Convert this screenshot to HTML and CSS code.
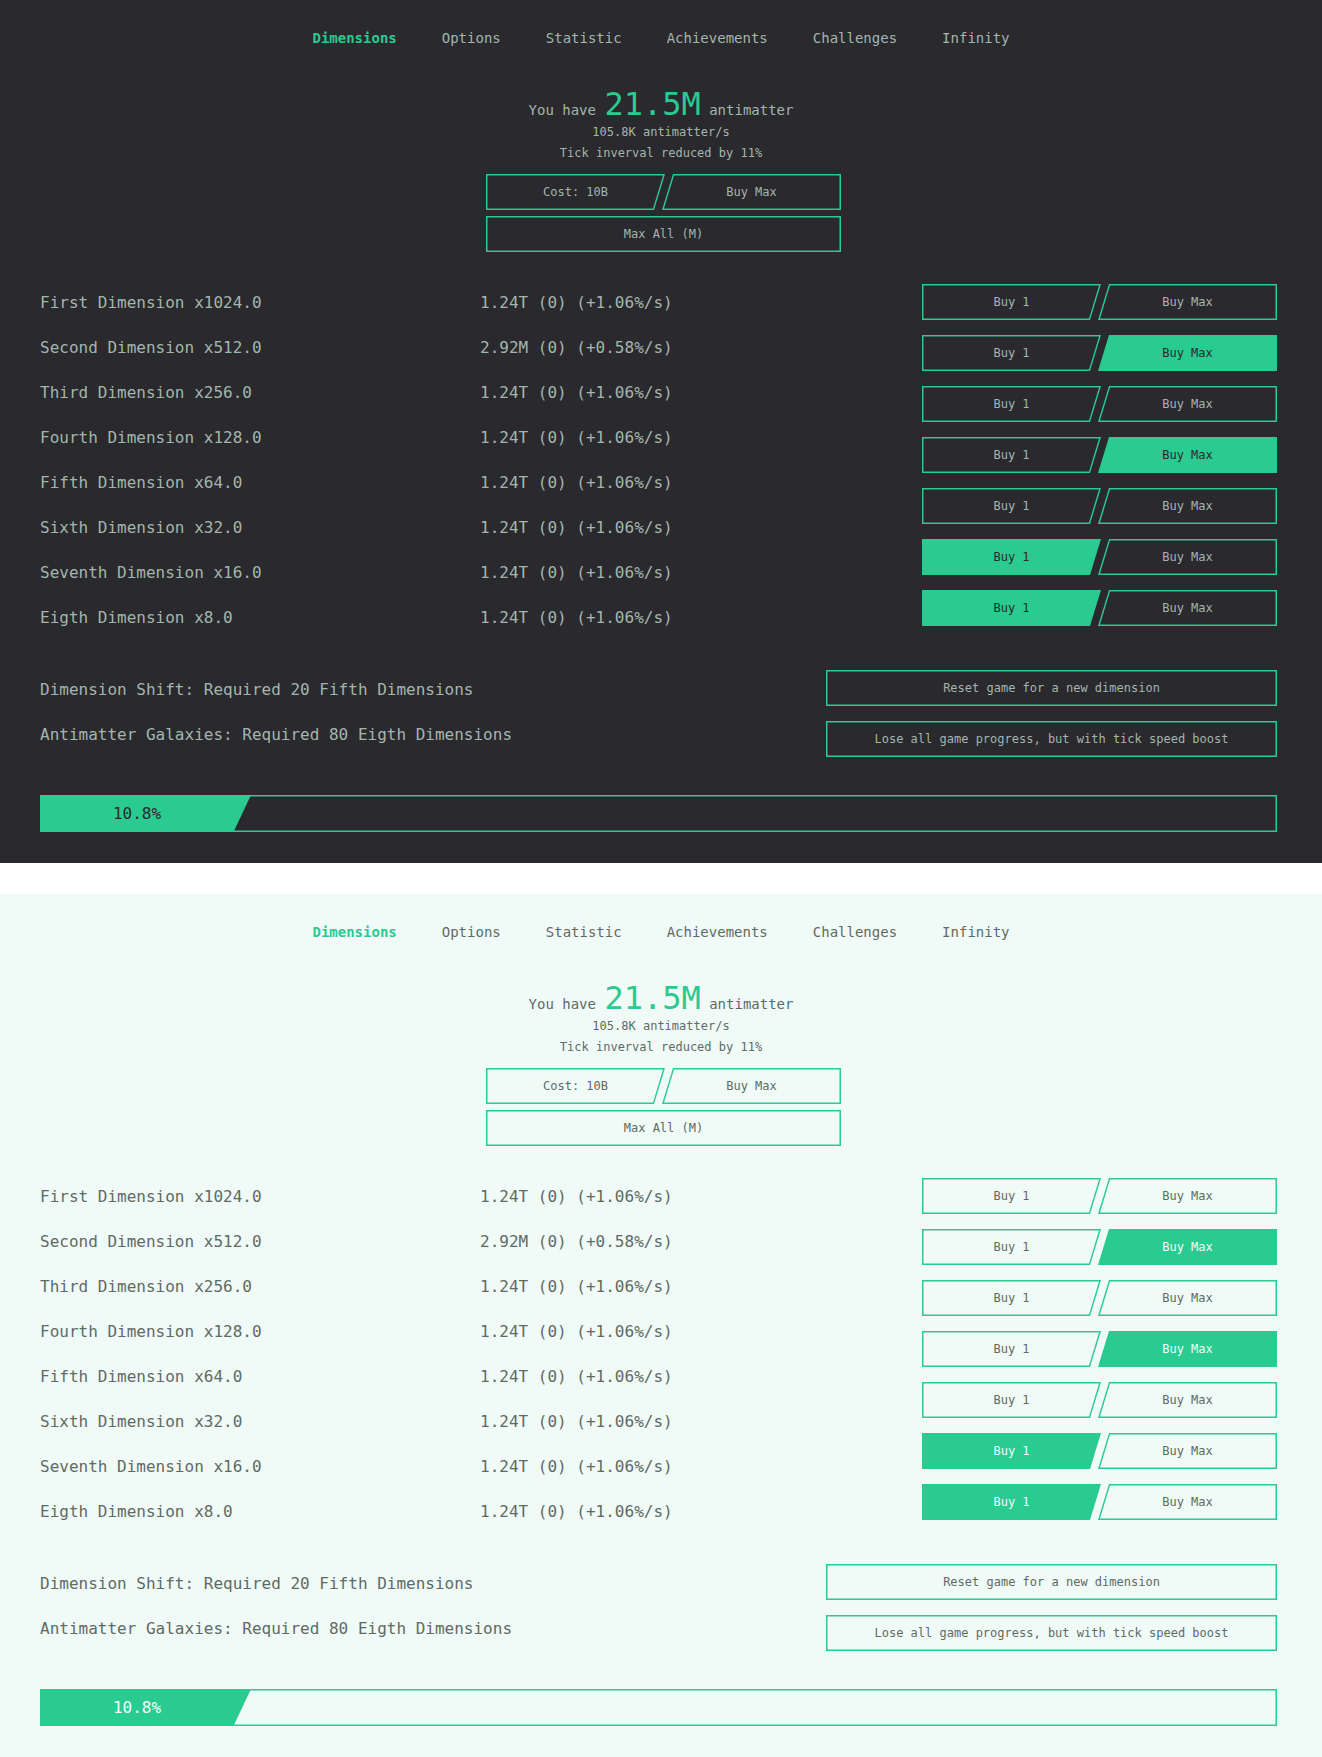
FILE: index.html
```html
<!DOCTYPE html>
<html lang="en">
<head>
<meta charset="utf-8">
<title>Antimatter Dimensions</title>
<link rel="stylesheet" href="styles.css">
</head>
<body>
<div class="theme dark">
  <nav class="tabs">
    <span class="tab active">Dimensions</span>
    <span class="tab">Options</span>
    <span class="tab">Statistic</span>
    <span class="tab">Achievements</span>
    <span class="tab">Challenges</span>
    <span class="tab">Infinity</span>
  </nav>
  <header class="summary">
    <p class="amount">You have <span class="big">21.5M</span> antimatter</p>
    <p class="rate">105.8K antimatter/s</p>
    <p class="rate">Tick inverval reduced by 11%</p>
    <div class="tick">
      <div class="pair">
        <button class="seg first">Cost: 10B</button>
        <button class="seg second">Buy Max</button>
      </div>
      <button class="box">Max All (M)</button>
    </div>
  </header>
  <section class="split dims">
    <div class="labels">
      <div class="row"><span class="name">First Dimension x1024.0</span><span class="val">1.24T (0) (+1.06%/s)</span></div>
      <div class="row"><span class="name">Second Dimension x512.0</span><span class="val">2.92M (0) (+0.58%/s)</span></div>
      <div class="row"><span class="name">Third Dimension x256.0</span><span class="val">1.24T (0) (+1.06%/s)</span></div>
      <div class="row"><span class="name">Fourth Dimension x128.0</span><span class="val">1.24T (0) (+1.06%/s)</span></div>
      <div class="row"><span class="name">Fifth Dimension x64.0</span><span class="val">1.24T (0) (+1.06%/s)</span></div>
      <div class="row"><span class="name">Sixth Dimension x32.0</span><span class="val">1.24T (0) (+1.06%/s)</span></div>
      <div class="row"><span class="name">Seventh Dimension x16.0</span><span class="val">1.24T (0) (+1.06%/s)</span></div>
      <div class="row"><span class="name">Eigth Dimension x8.0</span><span class="val">1.24T (0) (+1.06%/s)</span></div>
    </div>
    <div class="controls buys">
      <div class="pair"><button class="seg first">Buy 1</button><button class="seg second">Buy Max</button></div>
      <div class="pair"><button class="seg first">Buy 1</button><button class="seg second on">Buy Max</button></div>
      <div class="pair"><button class="seg first">Buy 1</button><button class="seg second">Buy Max</button></div>
      <div class="pair"><button class="seg first">Buy 1</button><button class="seg second on">Buy Max</button></div>
      <div class="pair"><button class="seg first">Buy 1</button><button class="seg second">Buy Max</button></div>
      <div class="pair"><button class="seg first on">Buy 1</button><button class="seg second">Buy Max</button></div>
      <div class="pair"><button class="seg first on">Buy 1</button><button class="seg second">Buy Max</button></div>
    </div>
  </section>
  <section class="split resets">
    <div class="labels">
      <div class="row">Dimension Shift: Required 20 Fifth Dimensions</div>
      <div class="row">Antimatter Galaxies: Required 80 Eigth Dimensions</div>
    </div>
    <div class="controls wide">
      <button class="box">Reset game for a new dimension</button>
      <button class="box">Lose all game progress, but with tick speed boost</button>
    </div>
  </section>
  <div class="progress"><div class="fill">10.8%</div></div>
</div>

<div class="theme light">
  <nav class="tabs">
    <span class="tab active">Dimensions</span>
    <span class="tab">Options</span>
    <span class="tab">Statistic</span>
    <span class="tab">Achievements</span>
    <span class="tab">Challenges</span>
    <span class="tab">Infinity</span>
  </nav>
  <header class="summary">
    <p class="amount">You have <span class="big">21.5M</span> antimatter</p>
    <p class="rate">105.8K antimatter/s</p>
    <p class="rate">Tick inverval reduced by 11%</p>
    <div class="tick">
      <div class="pair">
        <button class="seg first">Cost: 10B</button>
        <button class="seg second">Buy Max</button>
      </div>
      <button class="box">Max All (M)</button>
    </div>
  </header>
  <section class="split dims">
    <div class="labels">
      <div class="row"><span class="name">First Dimension x1024.0</span><span class="val">1.24T (0) (+1.06%/s)</span></div>
      <div class="row"><span class="name">Second Dimension x512.0</span><span class="val">2.92M (0) (+0.58%/s)</span></div>
      <div class="row"><span class="name">Third Dimension x256.0</span><span class="val">1.24T (0) (+1.06%/s)</span></div>
      <div class="row"><span class="name">Fourth Dimension x128.0</span><span class="val">1.24T (0) (+1.06%/s)</span></div>
      <div class="row"><span class="name">Fifth Dimension x64.0</span><span class="val">1.24T (0) (+1.06%/s)</span></div>
      <div class="row"><span class="name">Sixth Dimension x32.0</span><span class="val">1.24T (0) (+1.06%/s)</span></div>
      <div class="row"><span class="name">Seventh Dimension x16.0</span><span class="val">1.24T (0) (+1.06%/s)</span></div>
      <div class="row"><span class="name">Eigth Dimension x8.0</span><span class="val">1.24T (0) (+1.06%/s)</span></div>
    </div>
    <div class="controls buys">
      <div class="pair"><button class="seg first">Buy 1</button><button class="seg second">Buy Max</button></div>
      <div class="pair"><button class="seg first">Buy 1</button><button class="seg second on">Buy Max</button></div>
      <div class="pair"><button class="seg first">Buy 1</button><button class="seg second">Buy Max</button></div>
      <div class="pair"><button class="seg first">Buy 1</button><button class="seg second on">Buy Max</button></div>
      <div class="pair"><button class="seg first">Buy 1</button><button class="seg second">Buy Max</button></div>
      <div class="pair"><button class="seg first on">Buy 1</button><button class="seg second">Buy Max</button></div>
      <div class="pair"><button class="seg first on">Buy 1</button><button class="seg second">Buy Max</button></div>
    </div>
  </section>
  <section class="split resets">
    <div class="labels">
      <div class="row">Dimension Shift: Required 20 Fifth Dimensions</div>
      <div class="row">Antimatter Galaxies: Required 80 Eigth Dimensions</div>
    </div>
    <div class="controls wide">
      <button class="box">Reset game for a new dimension</button>
      <button class="box">Lose all game progress, but with tick speed boost</button>
    </div>
  </section>
  <div class="progress"><div class="fill">10.8%</div></div>
</div>
</body>
</html>
```

FILE: styles.css
```css
* { box-sizing: border-box; }

html, body {
  margin: 0;
  padding: 0;
  background: #ffffff;
}

body {
  font-family: "DejaVu Sans Mono", "Liberation Mono", monospace;
}

.theme {
  --green: #29cb91;
  height: 863px;
  padding-top: 28px;
  background: var(--bg);
  color: var(--fg);
}

.dark {
  --bg: #2a292d;
  --fg: #a3b6ae;
  --on-fg: #2a292d;
}

.light {
  --bg: #f0faf6;
  --fg: #5f6a65;
  --on-fg: #f3fbf8;
  margin-top: 31px;
  height: 863px;
}

/* tabs */
.tabs {
  display: flex;
  justify-content: center;
  gap: 45px;
  font-size: 14px;
  line-height: 20px;
}

.tab.active {
  color: var(--green);
  font-weight: bold;
}

/* summary */
.summary {
  text-align: center;
}

.summary p {
  margin: 0;
}

.summary .amount {
  margin-top: 40px;
  margin-bottom: 2px;
  font-size: 14px;
  line-height: 14px;
}

.big {
  font-size: 32px;
  line-height: 32px;
  color: var(--green);
  vertical-align: baseline;
}

.rate {
  font-size: 12px;
  line-height: 21px;
}

.tick {
  width: 355px;
  margin: 10px 0 0 calc(50% - 175px);
  display: flex;
  flex-direction: column;
  gap: 6px;
}

/* buttons */
button {
  font-family: inherit;
  font-size: 12px;
  color: var(--fg);
  border: 0;
  padding: 0;
  margin: 0;
  cursor: pointer;
}

.pair {
  display: flex;
  height: 36px;
}

.seg {
  position: relative;
  isolation: isolate;
  flex: 0 0 179px;
  height: 36px;
  background: var(--green);
}

.seg::before {
  content: "";
  position: absolute;
  inset: 0;
  z-index: -1;
  background: var(--bg);
}

.seg.first {
  clip-path: polygon(0 0, 100% 0, calc(100% - 11px) 100%, 0 100%);
}

.seg.first::before {
  clip-path: polygon(1.5px 1.5px, calc(100% - 2px) 1.5px, calc(100% - 12px) calc(100% - 1.5px), 1.5px calc(100% - 1.5px));
}

.seg.second {
  margin-left: -3px;
  clip-path: polygon(11px 0, 100% 0, 100% 100%, 0 100%);
}

.seg.second::before {
  clip-path: polygon(12px 1.5px, calc(100% - 1.5px) 1.5px, calc(100% - 1.5px) calc(100% - 1.5px), 2px calc(100% - 1.5px));
}

.seg.on {
  color: var(--on-fg);
}

.seg.on::before {
  display: none;
}

.box {
  height: 36px;
  width: 100%;
  background: transparent;
  box-shadow: inset 0 0 0 1.5px var(--green);
}

/* split rows */
.split {
  display: flex;
  justify-content: space-between;
  align-items: flex-start;
  margin: 0 45px 0 40px;
}

.dims {
  margin-top: 28px;
}

.resets {
  margin-top: 27px;
}

.row {
  display: flex;
  font-size: 16px;
  line-height: 45px;
  white-space: nowrap;
}

.name {
  flex: 0 0 440px;
}

.controls {
  display: flex;
  flex-direction: column;
  gap: 15px;
}

.buys {
  width: 355px;
  padding-top: 4px;
}

.wide {
  width: 451px;
  padding-top: 3px;
}

/* progress */
.progress {
  display: flex;
  height: 37px;
  margin: 38px 45px 0 40px;
  box-shadow: inset 0 0 0 1.5px var(--green);
}

.fill {
  width: 211px;
  padding-right: 17px;
  background: var(--green);
  clip-path: polygon(0 0, 100% 0, calc(100% - 17.5px) 100%, 0 100%);
  color: var(--on-fg);
  font-size: 16px;
  line-height: 37px;
  text-align: center;
}
```
